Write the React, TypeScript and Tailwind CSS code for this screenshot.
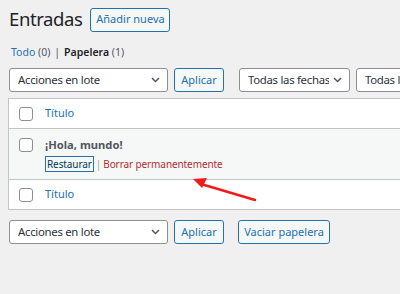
import React from 'react';

const font = { fontFamily: '"Noto Sans", "Open Sans", sans-serif' };

const Chevron = () => (
  <svg width="9" height="6" viewBox="0 0 9 6" className="shrink-0">
    <path d="M1 1l3.5 3.5L8 1" fill="none" stroke="#50575e" strokeWidth="1.5" />
  </svg>
);

const Select: React.FC<{ label: string; width: string }> = ({ label, width }) => (
  <div
    className={`${width} h-[24px] shrink-0 flex items-center justify-between gap-[4px] pl-[8px] pr-[7px] bg-white border border-[#8c8f94] rounded-[3px] text-[11.4px] text-[#2c3338] tracking-[-0.3px]`}
  >
    <span className="whitespace-nowrap overflow-hidden">{label}</span>
    <Chevron />
  </div>
);

const Button: React.FC<{ label: string; className?: string }> = ({ label, className = '' }) => (
  <div
    className={`h-[24px] shrink-0 flex items-center justify-center bg-[#f6f7f7] border border-[#2271b1] rounded-[3px] text-[11px] text-[#2271b1] ${className}`}
  >
    {label}
  </div>
);

const CheckBox = () => (
  <div className="w-[14px] h-[14px] rounded-[3px] border border-[#8c8f94] bg-white shrink-0" />
);

const HeaderRow: React.FC<{ last?: boolean }> = ({ last }) => (
  <div className={`h-[30px] flex items-center bg-white ${last ? 'border-t' : 'border-b'} border-[#c3c4c7]`}>
    <div className="w-[36px] pl-[10px] flex items-center">
      <CheckBox />
    </div>
    <span className="text-[11px] text-[#2271b1]">Título</span>
  </div>
);

export default function App() {
  return (
    <div className="w-[400px] h-[294px] bg-[#f0f0f1] overflow-hidden pl-[8px] pt-[8px]" style={font}>
      <div className="flex items-center gap-[8px] h-[23px] pl-[1px]">
        <h1 className="text-[18.5px] text-[#1d2327] leading-none tracking-[-0.4px]">Entradas</h1>
        <Button label="Añadir nueva" className="w-[80px] h-[23px]" />
      </div>

      <div className="mt-[15px] pl-[3px] text-[10.5px] text-[#50575e] flex items-center gap-[4px] h-[14px]">
        <span className="text-[#2271b1]">
          Todo <span className="text-[#50575e]">(0)</span>
        </span>
        <span className="text-[#50575e]">|</span>
        <span>
          <b className="text-[#1d2327] font-semibold">Papelera</b> (1)
        </span>
      </div>

      <div className="mt-[8px] flex items-center gap-[6px] pl-[1px]">
        <Select label="Acciones en lote" width="w-[159px]" />
        <Button label="Aplicar" className="w-[50px]" />
        <div className="w-[3px] shrink-0" />
        <Select label="Todas las fechas" width="w-[111px]" />
        <Select label="Todas las categorías" width="w-[140px]" />
      </div>

      <div className="relative mt-[6px] w-[520px] border border-[#c3c4c7] bg-white">
        <HeaderRow />
        <div className="h-[50px] bg-[#f6f7f7] flex">
          <div className="w-[36px] pl-[10px] pt-[9px]">
            <CheckBox />
          </div>
          <div className="pt-[8px]">
            <div className="text-[11.2px] font-bold text-[#50575e] leading-[16px]">¡Hola, mundo!</div>
            <div className="mt-[3px] flex items-center text-[10px] leading-[14px] tracking-[-0.1px]">
              <span className="border border-[#2271b1] px-[1px] text-[#043959]">Restaurar</span>
              <span className="text-[#a7aaad] mx-[2px]">|</span>
              <span className="text-[#b32d2e]">Borrar permanentemente</span>
            </div>
          </div>
        </div>
        <HeaderRow last />
        <svg className="absolute left-[172px] top-[75px]" width="80" height="30" viewBox="0 0 80 30">
          <line x1="74" y1="26" x2="20" y2="10" stroke="#f21b1b" strokeWidth="2.5" strokeLinecap="round" />
          <polygon points="12,5 26,4 21,14" fill="#f21b1b" />
        </svg>
      </div>

      <div className="mt-[10px] flex items-center gap-[6px] pl-[1px]">
        <Select label="Acciones en lote" width="w-[159px]" />
        <Button label="Aplicar" className="w-[50px]" />
        <div className="w-[2px] shrink-0" />
        <Button label="Vaciar papelera" className="w-[92px]" />
      </div>
    </div>
  );
}
